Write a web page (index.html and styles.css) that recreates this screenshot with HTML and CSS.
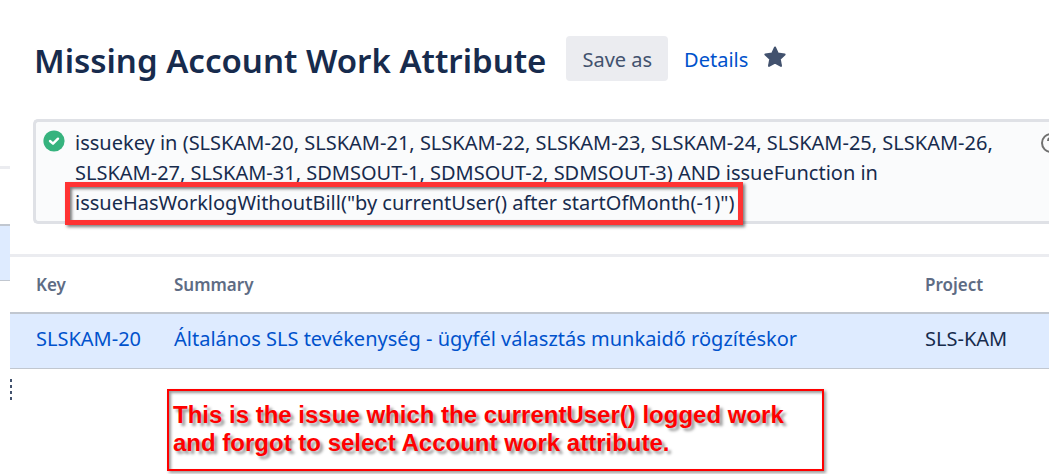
FILE: index.html
```
<!DOCTYPE html>
<html lang="en">
<head>
    <meta charset="UTF-8">
    <meta name="viewport" content="width=device-width, initial-scale=1.0">
    <title>Missing Account Work Attribute</title>
    <link rel="stylesheet" href="styles.css">
</head>
<body>

<div class="page">
    <aside class="sidebar">
        <div class="sidebar-top"></div>
        <div class="sidebar-list"></div>
        <div class="sidebar-item"></div>
    </aside>

    <main class="content">
        <header class="search-header">
            <h1>Missing Account Work Attribute</h1>
            <button type="button" class="save-btn">Save as</button>
            <a href="#" class="details-link">Details</a>
            <button type="button" class="star-btn" aria-label="Favourite">
                <svg width="22" height="22" viewBox="0 0 22 22">
                    <path d="M11 1.5 L13.9 7.6 L20.6 8.5 L15.8 13.1 L17 19.9 L11 16.7 L5 19.9 L6.2 13.1 L1.4 8.5 L8.1 7.6 Z" fill="#42526e" stroke="#42526e" stroke-width="2" stroke-linejoin="round"/>
                </svg>
            </button>
        </header>

        <form class="query">
            <svg class="query-status" width="22" height="22" viewBox="0 0 22 22" aria-hidden="true">
                <circle cx="11" cy="11" r="10.6" fill="#36b37e"/>
                <path d="M7 11 L10 13.7 L15 8.7" fill="none" stroke="#fff" stroke-width="2.4" stroke-linecap="round" stroke-linejoin="round"/>
            </svg>
            <textarea class="query-text" rows="3" spellcheck="false" aria-label="JQL query">issuekey in (SLSKAM-20, SLSKAM-21, SLSKAM-22, SLSKAM-23, SLSKAM-24, SLSKAM-25, SLSKAM-26, SLSKAM-27, SLSKAM-31, SDMSOUT-1, SDMSOUT-2, SDMSOUT-3) AND issueFunction in issueHasWorklogWithoutBill("by currentUser() after startOfMonth(-1)")</textarea>
            <span class="query-help" aria-hidden="true">
                <svg width="20" height="20" viewBox="0 0 20 20">
                    <circle cx="10" cy="10" r="9" fill="none" stroke="#707070" stroke-width="2"/>
                    <path d="M7 8 C7 4 13 4 13 8 C13 10 10 10 10 12 M10 14 V16" fill="none" stroke="#707070" stroke-width="2"/>
                </svg>
            </span>
            <div class="highlight"></div>
        </form>

        <table class="issues">
            <thead>
                <tr>
                    <th class="col-key">Key</th>
                    <th class="col-summary">Summary</th>
                    <th class="col-project">Project</th>
                </tr>
            </thead>
            <tbody>
                <tr>
                    <td><a href="#">SLSKAM-20</a></td>
                    <td><a href="#">Általános SLS tevékenység - ügyfél választás munkaidő rögzítéskor</a></td>
                    <td>SLS-KAM</td>
                </tr>
            </tbody>
        </table>

        <div class="note-row">
            <div class="resize-handle"></div>
            <p class="note">This is the issue which the currentUser() logged work<br>and forgot to select Account work attribute.</p>
        </div>
    </main>
</div>

</body>
</html>
```
FILE: styles.css
```
* {
    margin: 0;
    padding: 0;
    box-sizing: border-box;
}

body {
    font-family: 'Noto Sans', 'Open Sans', sans-serif;
    font-size: 20px;
    line-height: 30px;
    background-color: #fff;
    color: #172b4d;
    overflow: hidden;
}

a {
    color: #0052cc;
    text-decoration: none;
}

button {
    font: inherit;
    border: none;
    cursor: pointer;
}

.page {
    display: flex;
    min-height: 100vh;
}

/* Sidebar */
.sidebar {
    flex: 0 0 10px;
}

.sidebar-top {
    height: 169px;
    border-bottom: 3px solid #ebecf0;
}

.sidebar-list {
    height: 55px;
}

.sidebar-item {
    height: 57px;
    background-color: #deebff;
    border-top: 2px solid #c1c7d0;
    border-bottom: 1px solid #c1c7d0;
}

.content {
    flex: 1;
    min-width: 0;
}

/* Header */
.search-header {
    display: flex;
    align-items: center;
    padding: 36px 0 38px 24px;
}

h1 {
    padding-top: 4px;
    font-size: 33px;
    font-weight: 600;
    line-height: 41px;
    white-space: nowrap;
}

.save-btn {
    height: 45px;
    margin-left: 20px;
    padding: 2px 16px 0;
    background-color: #ebecf0;
    border-radius: 4px;
    color: #42526e;
}

.details-link {
    margin: 2px 16px 0;
}

.star-btn {
    display: flex;
    margin-bottom: 4px;
    background: none;
}

/* Query box */
.query {
    position: relative;
    display: flex;
    margin-left: 23px;
    padding: 6px 0 3px 7px;
    border: 3px solid #dfe1e6;
    border-right: none;
    border-radius: 5px 0 0 5px;
    background-color: #fafbfc;
}

.query-status {
    flex-shrink: 0;
    margin-top: 2px;
}

.query-text {
    flex: 1;
    min-width: 0;
    margin-left: 10px;
    border: none;
    outline: none;
    resize: none;
    overflow: hidden;
    background: none;
    color: inherit;
    font: inherit;
}

.query-help {
    width: 8px;
    margin: 5px 0 0 20px;
    overflow: hidden;
}

.query-help svg {
    display: block;
}

/* Red marker over the last line of the query */
.highlight {
    position: absolute;
    top: 60px;
    left: 29px;
    width: 678px;
    height: 43px;
    border: 5px solid #ff3333;
    box-shadow: 2px 2px 3px rgba(0, 0, 0, 0.5), inset 2px 2px 3px rgba(0, 0, 0, 0.5);
    pointer-events: none;
}

/* Issue table */
.issues {
    width: 100%;
    margin-top: 30px;
    border-top: 3px solid #ebecf0;
    border-collapse: separate;
    border-spacing: 0;
    table-layout: fixed;
    text-align: left;
}

.issues th {
    height: 57px;
    border-bottom: 2px solid #c1c7d0;
    color: #5e6c84;
    font-size: 17px;
    font-weight: 600;
}

.issues td {
    height: 55px;
    padding-bottom: 4px;
    border-bottom: 1px solid #c1c7d0;
    background-color: #deebff;
    white-space: nowrap;
}

.issues th:first-child,
.issues td:first-child {
    padding-left: 26px;
}

.col-key {
    width: 164px;
}

.col-project {
    width: 124px;
}

/* Annotation */
.note-row {
    display: flex;
    padding-top: 10px;
}

.resize-handle {
    width: 2px;
    height: 21px;
    background: repeating-linear-gradient(#42526e 0 3px, transparent 3px 6px);
}

.note {
    flex: 0 1 657px;
    margin: 10px 0 0 155px;
    padding: 10px 4px 12px;
    border: 2px solid #ff0000;
    box-shadow: 2px 2px 3px rgba(0, 0, 0, 0.4), inset 2px 2px 3px rgba(0, 0, 0, 0.4);
    color: #ff0000;
    font-family: 'Liberation Sans', Arial, sans-serif;
    font-size: 24px;
    font-weight: bold;
    line-height: 28px;
    text-shadow: 3px 3px 3px rgba(0, 0, 0, 0.4);
}
```
